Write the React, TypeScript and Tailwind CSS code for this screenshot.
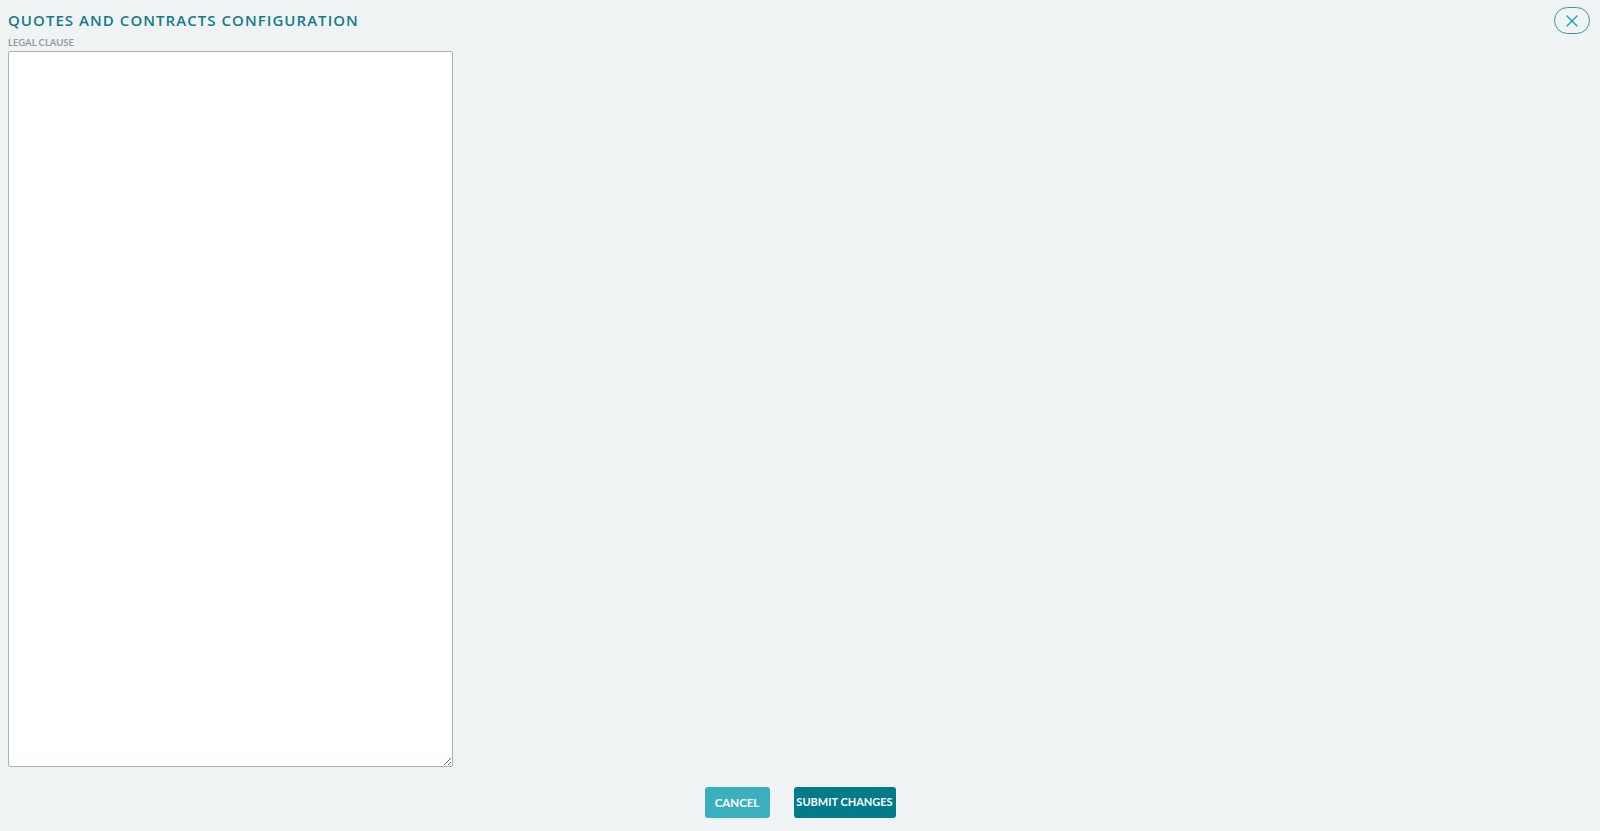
import { X } from "lucide-react";

export default function App() {
    return (
        <div className="w-full h-[831px] bg-[#eff3f4] flex flex-col px-2 pt-[9px] pb-[13px] font-['Lato',sans-serif]">
            <div className="flex justify-between items-start">
                <h1 className="text-[15px] leading-[20px] font-semibold tracking-[0.07em] text-[#137c88] font-['Open_Sans',sans-serif] mt-[1px]">
                    QUOTES AND CONTRACTS CONFIGURATION
                </h1>
                <button className="w-[36px] h-[27px] -mt-[2px] -mb-[6px] mr-[2px] rounded-full border-[1.5px] border-[#3f919b] flex justify-center items-center text-[#2aa3b3]">
                    <X size={20} strokeWidth={1.75} />
                </button>
            </div>
            <label className="mt-[7px] text-[9.5px] leading-[12px] font-bold text-[#969ea3]">LEGAL CLAUSE</label>
            <textarea className="mt-[2px] w-[445px] h-[716px] bg-white border border-[#aab0b3] rounded-[2px] outline-none p-1 text-sm" />
            <div className="flex-1 flex justify-center items-end gap-6">
                <button className="w-[65px] h-[31px] rounded-[3px] bg-[#3ab0bf] text-white text-[11.5px] font-bold whitespace-nowrap">CANCEL</button>
                <button className="w-[102px] h-[31px] rounded-[3px] bg-[#007b8a] text-white text-[11px] font-bold whitespace-nowrap">SUBMIT CHANGES</button>
            </div>
        </div>
    );
}
